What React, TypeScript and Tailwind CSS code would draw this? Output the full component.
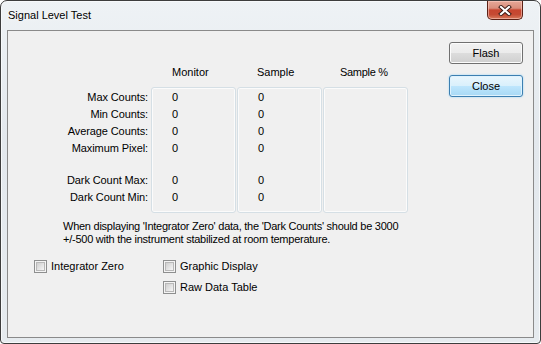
import React from "react";

const rows1 = ["Max Counts:", "Min Counts:", "Average Counts:", "Maximum Pixel:"];
const rows2 = ["Dark Count Max:", "Dark Count Min:"];

function Checkbox({ label }: { label: string }) {
  return (
    <div className="flex items-center gap-[4px] h-[21px]">
      <div className="w-[13px] h-[13px] border border-[#8e8f8f] bg-[#f4f4f4] p-[1px]">
        <div className="w-full h-full border border-[#b8b8b8] bg-[linear-gradient(135deg,#cfcfcf_0%,#e4e4e4_55%,#f6f6f6_100%)]" />
      </div>
      <span className="leading-[13px] whitespace-nowrap">{label}</span>
    </div>
  );
}

function ValueBox({ values }: { values: boolean }) {
  return (
    <div className="w-[85px] h-[126px] border border-[#d5dfe5] rounded-[3px] shadow-[inset_0_0_0_1px_#fbfbfb] pt-[1px] pl-[20px]">
      {values && (
        <>
          {rows1.map((r) => (
            <div key={r} className="h-[17px] leading-[17px]">0</div>
          ))}
          <div className="h-[15px]" />
          {rows2.map((r) => (
            <div key={r} className="h-[17px] leading-[17px]">0</div>
          ))}
        </>
      )}
    </div>
  );
}

export default function App() {
  return (
    <div className="w-[541px] h-[344px] flex flex-col border border-[#3d3d3d] rounded-t-[7px] rounded-b-[4px] overflow-hidden bg-[linear-gradient(180deg,#eef2f5_0%,#e3e8ed_40%,#e6ebef_100%)] shadow-[inset_0_0_0_1px_#f7f9fb] font-['Liberation_Sans',Arial,sans-serif] text-[11px] text-black">
      {/* title bar */}
      <div className="h-[29px] shrink-0 flex items-start">
        <div className="pl-[7px] pt-[8px] text-[11px] leading-[13px] text-black [text-shadow:0_0_6px_#ffffff]">
          Signal Level Test
        </div>
        <div className="flex-1" />
        <div className="mr-[17px] w-[36px] h-[19px] border border-t-0 border-[#5b2116] rounded-b-[5px] bg-[linear-gradient(180deg,#e6a898_0%,#d98e7c_40%,#c7452f_50%,#c54a33_75%,#d77a5c_100%)] shadow-[inset_0_0_0_1px_rgba(255,210,200,0.55)] flex items-center justify-center">
          <svg width="14" height="11" viewBox="0 0 14 11">
            <path d="M3 2 L11 9 M11 2 L3 9" stroke="#3a1a14" strokeWidth="4" strokeLinecap="square" />
            <path d="M3 2 L11 9 M11 2 L3 9" stroke="#ffffff" strokeWidth="2.2" strokeLinecap="square" />
          </svg>
        </div>
      </div>

      {/* client area */}
      <div className="mx-[6px] mb-[5px] flex-1 border border-[#8a8a8a] bg-[#f0f0f0] flex">
        <div className="flex-1 flex flex-col">
          {/* headers */}
          <div className="pt-[35px] flex h-[48px] leading-[13px]">
            <div className="w-[143px]" />
            <div className="w-[85px] pl-[21px]">Monitor</div>
            <div className="w-[1px]" />
            <div className="w-[85px] pl-[20px]">Sample</div>
            <div className="w-[1px]" />
            <div className="w-[85px] pl-[17px] tracking-[-0.3px]">Sample %</div>
          </div>

          {/* table */}
          <div className="mt-[8px] flex">
            <div className="ml-[50px] w-[90px] pt-[2px] text-right tracking-[-0.1px]">
              {rows1.map((r) => (
                <div key={r} className="h-[17px] leading-[17px] whitespace-nowrap">{r}</div>
              ))}
              <div className="h-[15px]" />
              {rows2.map((r) => (
                <div key={r} className="h-[17px] leading-[17px] whitespace-nowrap">{r}</div>
              ))}
            </div>
            <div className="ml-[3px] flex gap-[1px]">
              <ValueBox values />
              <ValueBox values />
              <ValueBox values={false} />
            </div>
          </div>

          {/* description */}
          <div className="mt-[7px] ml-[55px] leading-[13px] whitespace-nowrap tracking-[-0.25px]">
            When displaying 'Integrator Zero' data, the 'Dark Counts' should be 3000
            <br />
            +/-500 with the instrument stabilized at room temperature.
          </div>

          {/* checkboxes */}
          <div className="mt-[10px] flex">
            <div className="ml-[26px] w-[129px]">
              <Checkbox label="Integrator Zero" />
            </div>
            <div className="flex flex-col">
              <Checkbox label="Graphic Display" />
              <Checkbox label="Raw Data Table" />
            </div>
          </div>
        </div>

        {/* buttons */}
        <div className="w-[74px] mr-[10px] pt-[11px] flex flex-col gap-[11px]">
          <div className="h-[22px] rounded-[3px] border border-[#707070] bg-[linear-gradient(180deg,#f2f2f2_0%,#ebebeb_50%,#dddddd_50%,#cfcfcf_100%)] shadow-[inset_0_0_0_1px_#fcfcfc] flex items-center justify-center leading-[13px]">
            Flash
          </div>
          <div className="h-[22px] rounded-[3px] border border-[#3c7fb1] bg-[linear-gradient(180deg,#eaf6fd_0%,#d9f0fc_50%,#bee6fd_50%,#a7d9f5_100%)] shadow-[inset_0_0_0_1px_#dff2fd,0_0_2px_#8fd0f5] flex items-center justify-center leading-[13px]">
            Close
          </div>
        </div>
      </div>
    </div>
  );
}
